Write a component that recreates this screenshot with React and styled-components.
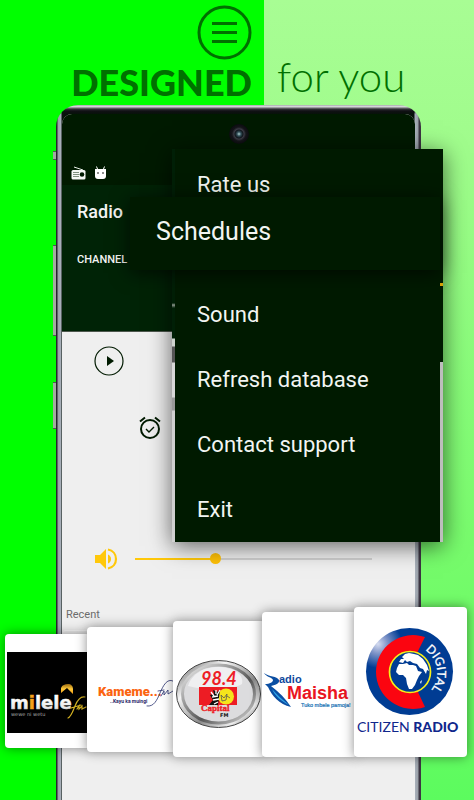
import React, { useState } from 'react'
import styled, { createGlobalStyle } from 'styled-components'

const GlobalStyle = createGlobalStyle`
    * { box-sizing: border-box; }
    body {
        margin: 0;
        font-family: Roboto, "Liberation Sans", sans-serif;
    }
    button {
        font-family: inherit;
        border: 0;
        background: none;
        padding: 0;
        cursor: pointer;
    }
`
const Page = styled.div`
    position: relative;
    display: flex;
    flex-direction: column;
    min-height: 100vh;
    overflow: hidden;
    background:
        linear-gradient(#00ff00, #00ff00) left / 55.7% 100% no-repeat,
        linear-gradient(#a8fd94 0%, #a0fc8c 18%, #76fb6b 70%, #5cfb5e 100%);
`
const Header = styled.header`
    display: grid;
    grid-template-columns: 55.7% 1fr;
    height: 105px;
    color: #007000;
    font-family: Lato, "Open Sans", sans-serif;
    line-height: 44px;
`
const HeaderLeft = styled.div`
    display: flex;
    flex-direction: column;
    align-items: flex-end;
    padding: 5px 12px 0 0;
`
const MenuButton = styled.button`
    width: 55px;
    height: 55px;
    color: inherit;
`
const Title = styled.span`
    font-size: 36px;
    font-weight: 900;
`
const Subtitle = styled.span`
    font-size: 42px;
    font-weight: 300;
    padding: 54px 0 0 13px;
`
const Phone = styled.main`
    position: relative;
    display: flex;
    flex: 1;
    margin: 0 53px 0 56px;
    padding: 9px 6px 0;
    border-radius: 22px 22px 0 0;
    background:
        linear-gradient(#85858a 0, #e8e8ec 1px, #c0c0c4 2px, #35353a 4px, #101014 6px, rgba(10, 12, 10, 0) 9px) no-repeat,
        linear-gradient(90deg, #26262c 0, #26262c 1px, #9aa0a8 2px, #a9b1bb 5px, #07120a 6px, #07120a calc(100% - 7px), #a9b1bb calc(100% - 6px), #9aa0a8 calc(100% - 3px), #3c3542 calc(100% - 2px), #3c3542 100%);
`
const SideKey = styled.i`
    position: absolute;
    left: -3px;
    top: ${props => props.$top}px;
    width: 3px;
    height: ${props => props.$height}px;
    background: #a3aaa0;
    border-top: 1px solid #555;
    border-bottom: 1px solid #555;
`
const Screen = styled.div`
    flex: 1;
    display: flex;
    flex-direction: column;
    border-radius: 10px 10px 0 0;
    overflow: hidden;
    background: #efefef;
`
const StatusBar = styled.div`
    display: flex;
    flex-direction: column;
    justify-content: space-between;
    height: 71px;
    padding: 10px 9px 4px;
    background: #001a00;
`
const Camera = styled.i`
    align-self: center;
    width: 20px;
    height: 20px;
    border-radius: 50%;
    background: radial-gradient(circle at 10px 10px, #b8d8d8 0, #34525c 2px, #10161c 4px, #3c3c46 5px, #15151a 7px, #0c0c10 10px);
`
const StatusIcons = styled.div`
    display: flex;
    align-items: center;
    gap: 8px;
    padding-bottom: 1px;
`
const AppBar = styled.div`
    height: 147px;
    padding: 14px 15px;
    color: #f4f4f4;
    background: #002306;
    border-bottom: 1px solid #4d574d;
`
const AppName = styled.h1`
    margin: 0 0 24px;
    font-size: 18px;
    line-height: 25px;
    font-weight: 500;
`
const Tab = styled.button`
    color: #f4f4f4;
    font-size: 11px;
    line-height: 22px;
    font-weight: 500;
`
const Player = styled.section`
    display: flex;
    flex-direction: column;
    align-items: flex-start;
    padding: 14px 43px 0 32px;
`
const PlayButton = styled.button`
    width: 30px;
    height: 30px;
`
const AlarmButton = styled.button`
    width: 24px;
    height: 24px;
    margin: 40px 0 0 44px;
`
const Volume = styled.label`
    display: flex;
    align-items: center;
    gap: 17px;
    width: 100%;
    margin-top: 107px;
`
const Range = styled.input`
    flex: 1;
    min-width: 0;
    height: 12px;
    margin: 0;
    appearance: none;
    background: transparent;
    &::-webkit-slider-runnable-track {
        height: 2px;
        background: linear-gradient(90deg, #ffc80a 33%, #cfcfcf 33%);
    }
    &::-webkit-slider-thumb {
        appearance: none;
        width: 11px;
        height: 11px;
        margin-top: -5px;
        border-radius: 50%;
        background: #ffc107;
    }
`
const Recent = styled.h2`
    margin: 36px 0 8px 4px;
    color: #6c6c6c;
    font-size: 11px;
    line-height: 15px;
    font-weight: 400;
`
const RecentShelf = styled.div`
    height: 120px;
    margin: 0 1px;
    border-radius: 3px;
    border-top: 1px solid #fafafa;
`
const Menu = styled.nav`
    position: absolute;
    top: 149px;
    left: 36.3%;
    right: 31px;
    display: flex;
    flex-direction: column;
    padding: 3px 3px 0;
    /* thin strips of the list below show on both edges */
    background:
        linear-gradient(#001a00, #001a00) center / calc(100% - 6px) 100% no-repeat,
        linear-gradient(#001f06 0, #001f06 154px, #8c968c 156px, #001f06 159px, #001f06 189px, #cfd4cf 190px, #cfd4cf 197px, #555 198px, #555 213px, #d8d8d8 214px, #d8d8d8 248px, #999 249px, #999 261px, #d0d0d0 262px) left / 3px 100% no-repeat,
        linear-gradient(#001a00 0, #001a00 134px, #dba506 134px, #dba506 137px, #001a00 137px, #001a00 213px, #bdbdbd 213px) right / 3px 100% no-repeat;
    box-shadow: 0 4px 22px rgba(0, 0, 0, 0.6);
`
const MenuItem = styled.button`
    height: 65px;
    padding-left: 22px;
    text-align: left;
    color: #f2f5f2;
    font-size: 22px;
    line-height: 26px;
`
const MenuItemActive = styled(MenuItem)`
    position: relative;
    height: 73px;
    margin: -20px 0 12px -45px;
    padding-left: 26px;
    font-size: 25px;
    line-height: 30px;
    padding-bottom: 4px;
    background: #001a00;
    box-shadow: 0 3px 18px rgba(0, 0, 0, 0.65);
`
const Stations = styled.div`
    position: absolute;
    left: 5px;
    right: 7px;
    bottom: 43px;
    display: flex;
    align-items: flex-end;
`
const Card = styled.a`
    flex: ${props => props.$grow} 1 0;
    min-width: 0;
    position: relative;
    margin-bottom: ${props => props.$lift || 0}px;
    border-radius: 4px;
    overflow: hidden;
    background: #fff;
    box-shadow: 0 0 12px rgba(0, 0, 0, 0.45);
    & + & { margin-left: -3px; }
    svg { display: block; width: 100%; }
`

const Milele = () => (
    <svg viewBox="5 634 85 114" role="img" aria-label="Milele FM">
        <defs>
            <linearGradient id="silver" x1="0" y1="0" x2="0" y2="1">
                <stop offset="0.3" stopColor="#fff" />
                <stop offset="0.75" stopColor="#e8e8e8" />
                <stop offset="1" stopColor="#777" />
            </linearGradient>
            <linearGradient id="gold" x1="0" y1="0" x2="0" y2="1">
                <stop offset="0" stopColor="#9a6a10" />
                <stop offset="0.5" stopColor="#ffc93a" />
                <stop offset="1" stopColor="#f39a12" />
            </linearGradient>
        </defs>
        <rect x="7" y="652" width="81" height="81" />
        <text x="10" y="709" fontFamily="DejaVu Sans" fontWeight="700" fontSize="18" fill="url(#silver)" stroke="url(#silver)" strokeWidth="0.500">m<tspan fill="#f5a11c" stroke="#f5a11c">i</tspan>lele</text>
        <path d="M61 693V688C62 685 65 684 68 684C71 684 73 686 73 689V694L67 688Z" fill="url(#gold)" />
        <text x="11" y="716" fontFamily="DejaVu Sans" fontSize="5" fill="#aaa">wewe ni wetu</text>
        <path d="M85 697C80 696 77 701 75 706C73 711 71 717 68 718M71 708L81 705M77 709L79 706L79 709L82 706L82 709L86 707" fill="none" stroke="#d6b322" strokeWidth="1.200" strokeLinecap="round" />
    </svg>
)

const Kameme = () => (
    <svg viewBox="87 627 89 125" role="img" aria-label="Kameme FM">
        <text x="98" y="696" fontFamily="Roboto" fontWeight="900" fontSize="13" fill="#fb6410">Kameme...</text>
        <text x="110" y="703" fontFamily="Roboto" fontWeight="700" fontSize="5" fill="#2a2768">..Kayu ka muingi</text>
        <path d="M173 681C167 678 163 686 160 693C157 700 154 707 147 706M158 691L164 690M161 696L164 691L164 695L168 690L168 694L173 691" fill="none" stroke="#27306f" strokeWidth="0.8" strokeLinecap="round" />
    </svg>
)

const Capital = () => (
    <svg viewBox="173 621 92 136" role="img" aria-label="98.4 Capital FM">
        <defs>
            <linearGradient id="rim" x1="0" y1="0" x2="1" y2="1">
                <stop offset="0" stopColor="#555" />
                <stop offset="0.3" stopColor="#f5f5f5" />
                <stop offset="0.6" stopColor="#8a8a8a" />
                <stop offset="0.8" stopColor="#eee" />
                <stop offset="1" stopColor="#222" />
            </linearGradient>
            <linearGradient id="rimInner" x1="0" y1="0" x2="1" y2="1">
                <stop offset="0" stopColor="#f5f5f5" />
                <stop offset="0.6" stopColor="#555" />
                <stop offset="1" stopColor="#e5e5e5" />
            </linearGradient>
        </defs>
        <ellipse cx="218.500" cy="694" rx="42" ry="33.500" fill="url(#rim)" stroke="#444" strokeWidth="1" />
        <ellipse cx="218.500" cy="694" rx="36" ry="29" fill="#dcdcde" stroke="url(#rimInner)" strokeWidth="3" />
        <path d="M188 686C192 672 207 666 221 667C235 668 244 675 242 684C235 689 211 692 188 686Z" fill="#efeff1" />
        <text x="201" y="685" fontFamily="Lato" fontStyle="italic" fontWeight="700" fontSize="18" fill="#ee1c25">98.4</text>
        <rect x="199" y="687" width="38" height="18" fill="#ed1c24" />
        <circle cx="226" cy="696.500" r="8" fill="#f5e51b" />
        <path d="M209 705L213 700L210 695L214 694L213 690L217 692L220 690L218 705Z" fill="#111" />
        <path d="M211 692L214 696M216 690V694M220 690L217 695M212 697L218 696M213 700L219 699M214 704L218 702" stroke="#fff" strokeWidth="1.300" />
        <path d="M221 695L224 698L227 694L226 700L222 701ZM227 696L230 698" fill="none" stroke="#555" strokeWidth="0.800" />
        <text x="201" y="711" fontFamily="Liberation Serif" fontWeight="700" fontSize="9" fill="#ed1c24" stroke="#ed1c24" strokeWidth="0.400">Capital</text>
        <text x="220" y="717" fontFamily="DejaVu Sans" fontWeight="700" fontSize="5" fill="#111">FM</text>
    </svg>
)

const Maisha = () => (
    <svg viewBox="262 613 95 145" role="img" aria-label="Radio Maisha">
        <path d="M264 674C269 678 277 677 279 681C280 684 276 686 271 687C279 693 286 700 291 708C279 705 272 697 268 688L265 685C270 685 273 683 273 681C272 678 266 678 264 674Z" fill="#0b4ea2" />
        <path d="M272 690C277 696 283 701 289 706C281 702 275 697 272 690Z" fill="#2fa3e6" />
        <text x="279" y="684" fontFamily="Liberation Sans" fontWeight="700" fontSize="11" fill="#10499c">adio</text>
        <text x="287" y="700" fontFamily="Liberation Sans" fontWeight="700" fontSize="18" fill="#ea1421">Maisha</text>
        <text x="301" y="708" fontFamily="Liberation Sans" fontSize="5.500" fill="#1470b4" stroke="#1470b4" strokeWidth="0.200">Tuko mbele pamoja!</text>
    </svg>
)

const Citizen = () => (
    <svg viewBox="354 607 113 150" role="img" aria-label="Citizen Radio Digital">
        <defs>
            <radialGradient id="shine" gradientUnits="userSpaceOnUse" cx="378" cy="644" r="24">
                <stop offset="0" stopColor="#d5dcf0" />
                <stop offset="0.4" stopColor="#7f94c8" />
                <stop offset="1" stopColor="#003c93" />
            </radialGradient>
            <path id="digitalArc" d="M425 650A27 27 0 0 1 422 697" />
        </defs>
        <circle cx="409.500" cy="671.500" r="43.500" fill="url(#shine)" />
        <path d="M425 637A37 37 0 1 0 425 707L417 690A20 20 0 1 1 417 653Z" fill="#fb0510" />
        <circle cx="410" cy="672" r="20.500" fill="#003c93" stroke="#f7f018" strokeWidth="1.700" />
        <path d="M397 668L399 664L403 664L407 663L409 665L413 665L416 666L418 671L422 672L419 676L417 680L415 685L412 689L409 689L407 684L406 678L403 675L399 675L396 672Z" fill="#fff" />
        <path d="M399 662L401 659L404 659L402 657L405 654L409 653L414 654L418 655L423 659L427 665L429 671L427 670L426 674L423 669L420 668L417 664L413 663L410 661L407 662L405 660L403 663Z" fill="#fff" />
        <path d="M420 682L422 680L421 684Z" fill="#fff" />
        <text fontFamily="Lato" fontSize="12" fill="#fff" stroke="#fff" strokeWidth="0.300"><textPath href="#digitalArc">DIGITAL</textPath></text>
        <text x="357" y="732" fontFamily="Lato" fontSize="14" fill="#10278c">CITIZEN <tspan fontWeight="900">RADIO</tspan></text>
    </svg>
)

const stations = [
    { id: 'milele', grow: 85, lift: 9, Logo: Milele },
    { id: 'kameme', grow: 89, lift: 5, Logo: Kameme },
    { id: 'capital', grow: 92, Logo: Capital },
    { id: 'maisha', grow: 95, Logo: Maisha },
    { id: 'citizen', grow: 113, Logo: Citizen },
]

const App = () => {
    const [volume, setVolume] = useState(33);
    return (
        <>
            <GlobalStyle />
            <Page>
                <Header>
                    <HeaderLeft>
                        <MenuButton aria-label="Menu">
                            <svg width="55" height="55" viewBox="0 0 55 55" fill="none" stroke="currentColor" strokeWidth="3">
                                <circle cx="27.500" cy="27.500" r="25.500" />
                                <path d="M15 18.500H40M15 27.500H40M15 36.500H40" />
                            </svg>
                        </MenuButton>
                        <Title>DESIGNED</Title>
                    </HeaderLeft>
                    <Subtitle>for you</Subtitle>
                </Header>

                <Phone>
                    <SideKey $top={46} $height={9} />
                    <SideKey $top={140} $height={91} />
                    <SideKey $top={277} $height={47} />
                    <Screen>
                        <StatusBar>
                            <Camera />
                            <StatusIcons>
                                <svg width="15" height="14" viewBox="0 0 15 14">
                                    <path d="M3 1L12 4" stroke="#e8f0e8" strokeWidth="1" />
                                    <rect x="0.500" y="4" width="14" height="9.500" rx="1.500" fill="#f5f8f5" />
                                    <path d="M2 6.500H8M2 8.500H8M2 10.500H8" stroke="#7f907f" strokeWidth="1" />
                                    <circle cx="11" cy="8.500" r="2.300" fill="#001a00" />
                                </svg>
                                <svg width="13" height="14" viewBox="0 0 13 14">
                                    <path d="M3.500 3L2.500 0.500M9.500 3L10.500 0.500" stroke="#fff" />
                                    <path d="M1 3H12V10Q12 13 9 13H4Q1 13 1 10Z" fill="#fff" />
                                    <circle cx="4" cy="7" r="0.800" />
                                    <circle cx="9" cy="7" r="0.800" />
                                </svg>
                            </StatusIcons>
                        </StatusBar>
                        <AppBar>
                            <AppName>Radio</AppName>
                            <Tab>CHANNEL</Tab>
                        </AppBar>
                        <Player>
                            <PlayButton aria-label="Play">
                                <svg width="30" height="30" viewBox="0 0 30 30">
                                    <circle cx="15" cy="15" r="14" fill="none" stroke="#001a00" strokeWidth="1.200" />
                                    <path d="M13 10L20 15L13 20Z" fill="#001a00" />
                                </svg>
                            </PlayButton>
                            <AlarmButton aria-label="Alarm">
                                <svg width="24" height="24" viewBox="0 0 24 24" fill="none" stroke="#001a00" strokeWidth="2">
                                    <circle cx="12" cy="13" r="9" />
                                    <path d="M2 5.500L7 1.500M22 5.500L17 1.500" />
                                    <path d="M8 13L11 16L16 11" strokeWidth="1.400" />
                                </svg>
                            </AlarmButton>
                            <Volume>
                                <svg width="24" height="24" viewBox="0 0 24 24" fill="#ffc80a" role="img" aria-label="Volume">
                                    <path d="M1 8H6L12 2V22L6 16H1Z" />
                                    <path d="M14 7.500Q17 9 17 12Q17 15 14 16.500Z" />
                                    <path d="M14 2.500C19 3.500 22 7.500 22 12S19 20.500 14 21.500" fill="none" stroke="#ffc80a" strokeWidth="2.200" />
                                </svg>
                                <Range type="range" value={volume} onChange={e => setVolume(e.target.value)} />
                            </Volume>
                        </Player>
                        <Recent>Recent</Recent>
                        <RecentShelf />
                    </Screen>
                </Phone>

                <Menu>
                    <MenuItem>Rate us</MenuItem>
                    <MenuItemActive>Schedules</MenuItemActive>
                    <MenuItem>Sound</MenuItem>
                    <MenuItem>Refresh database</MenuItem>
                    <MenuItem>Contact support</MenuItem>
                    <MenuItem>Exit</MenuItem>
                </Menu>

                <Stations>
                    {stations.map(({ id, grow, lift, Logo }) => (
                        <Card key={id} href={`#${id}`} $grow={grow} $lift={lift}><Logo /></Card>
                    ))}
                </Stations>
            </Page>
        </>
    )
}

export default App
